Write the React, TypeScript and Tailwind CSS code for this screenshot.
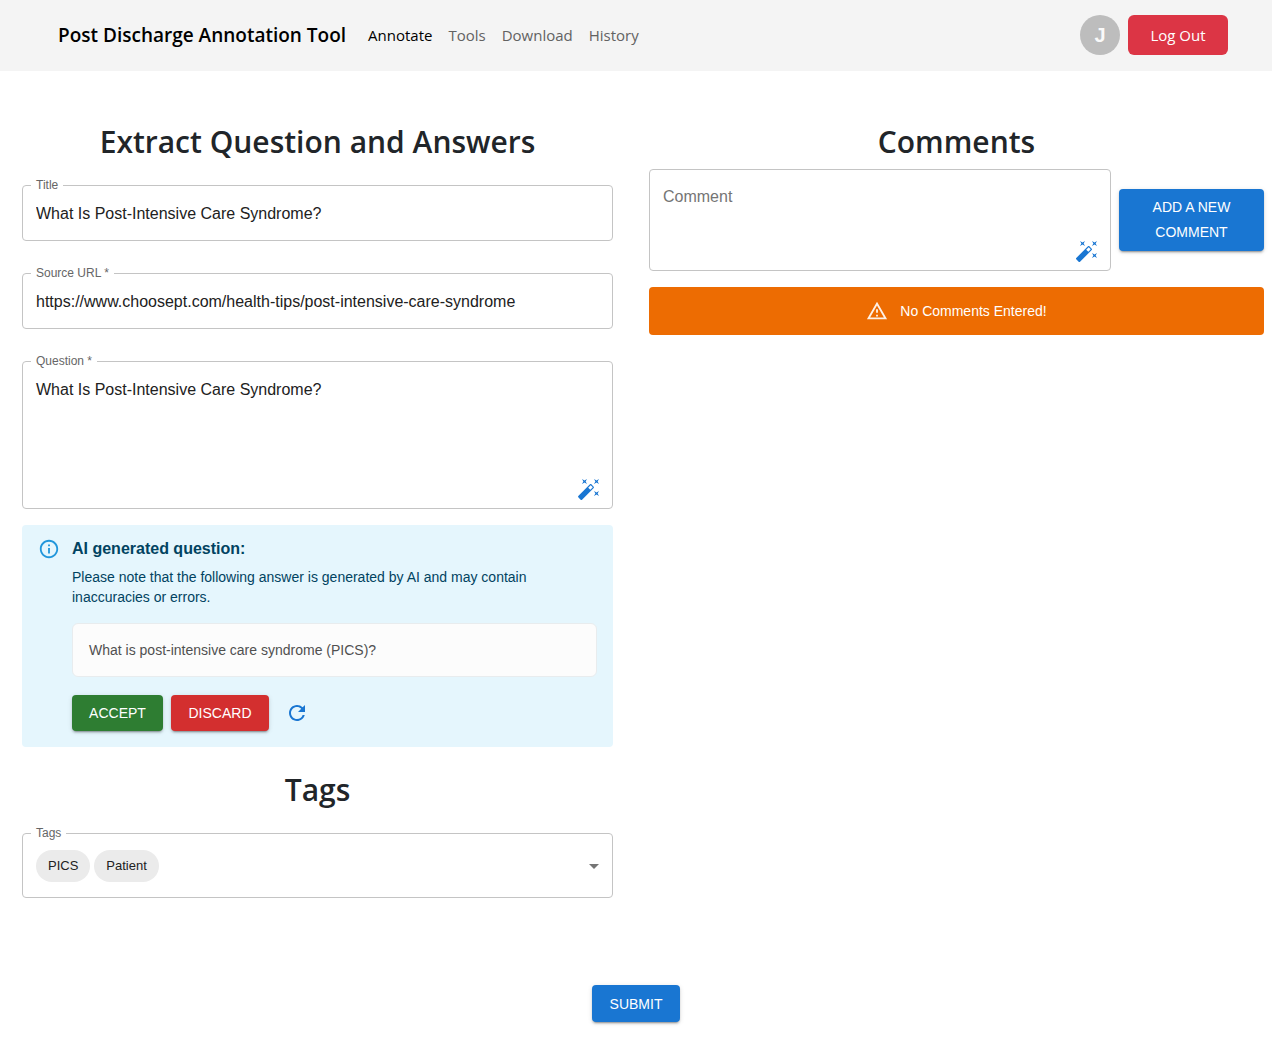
import type { ReactNode } from "react";
import { MdArrowDropDown, MdOutlineInfo, MdOutlineReportProblem, MdRefresh } from "react-icons/md";

const SHADOW =
  "shadow-[0_3px_1px_-2px_rgba(0,0,0,0.2),0_2px_2px_0_rgba(0,0,0,0.14),0_1px_5px_0_rgba(0,0,0,0.12)]";

function WandIcon() {
  return (
    <svg viewBox="0 0 24 24" className="size-6" fill="currentColor" aria-hidden="true">
      <path d="M7.5 5.6 10 7 8.6 4.5 10 2 7.5 3.4 5 2l1.4 2.5L5 7zm12 9.8L17 14l1.4 2.5L17 19l2.5-1.4L22 19l-1.4-2.5L22 14zM22 2l-2.5 1.4L17 2l1.4 2.5L17 7l2.5-1.4L22 7l-1.4-2.5zm-8.66 10.78 2.44-2.44-2.12-2.12-2.44 2.44zm1.03-5.49 2.34 2.34c.39.37.39 1.02 0 1.41L5.04 22.71c-.39.39-1.04.39-1.41 0l-2.34-2.34c-.39-.37-.39-1.02 0-1.41L12.96 7.29c.39-.39 1.04-.39 1.41 0z" />
    </svg>
  );
}

function WandButton({ label }: { label: string }) {
  return (
    <button type="button" aria-label={label} className="absolute right-[11px] bottom-[7px] text-[#1976d2]">
      <WandIcon />
    </button>
  );
}

function Heading({ children }: { children: ReactNode }) {
  return (
    <h2 className="text-center font-['Open_Sans',sans-serif] text-[30px] leading-[38px] font-semibold text-[#212529]">
      {children}
    </h2>
  );
}

function Outlined({ id, label, children }: { id: string; label: string; children: ReactNode }) {
  return (
    <div className="relative rounded border border-[#c4c4c4]">
      <label htmlFor={id} className="absolute -top-[9px] left-2 bg-white px-[5px] text-xs leading-4 text-[#666]">
        {label}
      </label>
      {children}
    </div>
  );
}

function Chip({ children }: { children: ReactNode }) {
  return (
    <span className="flex h-8 items-center rounded-full bg-[#ebebeb] px-3 text-[13px] text-[#212121]">{children}</span>
  );
}

export default function App() {
  return (
    <div className="min-h-screen bg-white font-['Liberation_Sans',Arial,sans-serif] text-[#212121]">
      <header className="flex items-center bg-[#f4f4f4] pt-[15px] pr-11 pb-4 pl-[58px] font-['Open_Sans',sans-serif]">
        <a href="#" className="mr-[22px] text-[19px] leading-10 font-semibold text-black">
          Post Discharge Annotation Tool
        </a>
        <nav className="flex gap-4 text-[15px] text-[#626262]">
          <a href="#" className="text-black">Annotate</a>
          <a href="#">Tools</a>
          <a href="#">Download</a>
          <a href="#">History</a>
        </nav>
        <div className="ml-auto flex items-center gap-2">
          <div className="flex size-10 items-center justify-center rounded-full bg-[#bdbdbd] font-['Liberation_Sans',sans-serif] text-xl font-bold text-[#fafafa]">
            J
          </div>
          <button type="button" className="h-10 w-[100px] rounded-md bg-[#dc3545] text-[15px] text-white">
            Log Out
          </button>
        </div>
      </header>

      <main>
        <div className="grid grid-cols-2 pt-[52px]">
          <section className="flex flex-col gap-6 pr-[23px] pl-[22px]">
            <Heading>Extract Question and Answers</Heading>
            <div className="flex flex-col gap-8">
              <Outlined id="title" label="Title">
                <input
                  id="title"
                  defaultValue="What Is Post-Intensive Care Syndrome?"
                  className="block h-[54px] w-full bg-transparent px-[13px] pt-0.5 outline-none"
                />
              </Outlined>
              <Outlined id="url" label="Source URL *">
                <input
                  id="url"
                  defaultValue="https://www.choosept.com/health-tips/post-intensive-care-syndrome"
                  className="block h-[54px] w-full bg-transparent px-[13px] pt-0.5 outline-none"
                />
              </Outlined>
              <div className="flex flex-col gap-4">
                <Outlined id="question" label="Question *">
                  <textarea
                    id="question"
                    defaultValue="What Is Post-Intensive Care Syndrome?"
                    className="block h-[146px] w-full resize-none bg-transparent px-[13px] py-4 leading-6 outline-none"
                  />
                  <WandButton label="Generate question" />
                </Outlined>
                <div className="flex gap-3 rounded bg-[#e5f6fd] px-4 pt-3 pb-4 text-sm text-[#014361]">
                  <MdOutlineInfo className="mt-px size-[22px] shrink-0 text-[#2196db]" />
                  <div className="min-w-0 grow">
                    <h3 className="text-base leading-6 font-bold">AI generated question:</h3>
                    <p className="mt-[6px] leading-5">
                      Please note that the following answer is generated by AI and may contain inaccuracies or errors.
                    </p>
                    <div className="mt-4 rounded-md border border-[#e8ecee] bg-[#fcfcfc] p-4 leading-5 text-[#505050]">
                      What is post-intensive care syndrome (PICS)?
                    </div>
                    <div className="mt-[18px] flex items-center gap-2 text-white">
                      <button type="button" className={`h-9 w-[91px] rounded bg-[#2e7d32] ${SHADOW}`}>ACCEPT</button>
                      <button type="button" className={`h-9 w-[98px] rounded bg-[#d32f2f] ${SHADOW}`}>DISCARD</button>
                      <button type="button" aria-label="Regenerate" className="ml-2 text-[#1976d2]">
                        <MdRefresh className="size-6" />
                      </button>
                    </div>
                  </div>
                </div>
              </div>
            </div>
            <Heading>Tags</Heading>
            <Outlined id="tags" label="Tags">
              <button
                id="tags"
                type="button"
                aria-haspopup="listbox"
                className="flex w-full items-center gap-1 pt-4 pr-[6px] pb-[15px] pl-[13px]"
              >
                <Chip>PICS</Chip>
                <Chip>Patient</Chip>
                <MdArrowDropDown className="ml-auto size-6 text-[#757575]" />
              </button>
            </Outlined>
          </section>

          <section className="pr-2 pl-[13px]">
            <Heading>Comments</Heading>
            <div className="mt-2 flex items-center gap-2">
              <div className="relative grow rounded border border-[#c4c4c4]">
                <textarea
                  aria-label="Comment"
                  placeholder="Comment"
                  className="block h-[100px] w-full resize-none bg-transparent px-[13px] py-[15px] leading-6 outline-none placeholder:text-[#757575]"
                />
                <WandButton label="Improve comment" />
              </div>
              <button
                type="button"
                className={`w-[145px] shrink-0 rounded bg-[#1976d2] px-4 py-[6px] text-sm leading-[25px] text-white ${SHADOW}`}
              >
                ADD A NEW COMMENT
              </button>
            </div>
            <div className="mt-4 flex h-12 items-center justify-center gap-3 rounded bg-[#ed6c02] text-sm text-white">
              <MdOutlineReportProblem className="size-[22px] opacity-90" />
              No Comments Entered!
            </div>
          </section>
        </div>
        <div className="flex justify-center pt-[87px] pb-10">
          <button type="submit" className={`h-[37px] w-[88px] rounded bg-[#1976d2] text-sm text-white ${SHADOW}`}>
            SUBMIT
          </button>
        </div>
      </main>
    </div>
  );
}
